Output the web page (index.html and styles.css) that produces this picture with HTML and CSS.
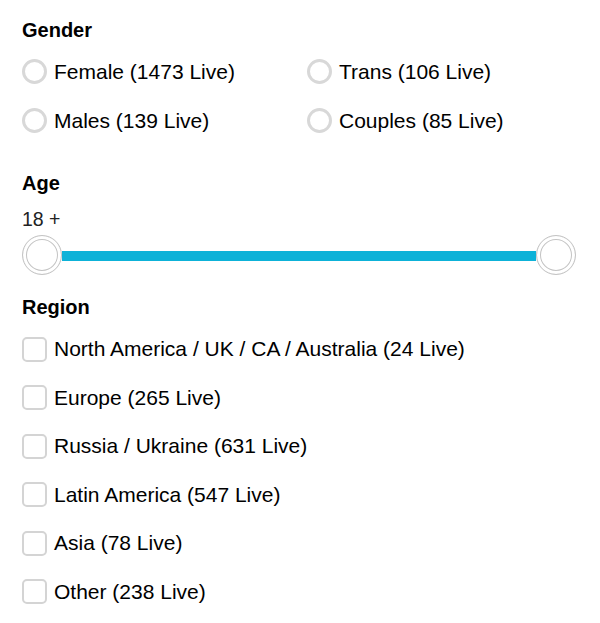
FILE: index.html
```html
<!DOCTYPE html>
<html lang="en">
  <head>
    <meta charset="UTF-8" />
    <meta name="viewport" content="width=device-width, initial-scale=1.0" />
    <title>Filters</title>
    <link rel="stylesheet" href="styles.css">
  </head>
  <body>
    <div class="filters">
      <h3 class="filter-title">Gender</h3>
      <div class="gender-list">
        <label class="option"><span class="radio"></span>Female (1473 Live)</label>
        <label class="option"><span class="radio"></span>Trans (106 Live)</label>
        <label class="option"><span class="radio"></span>Males (139 Live)</label>
        <label class="option"><span class="radio"></span>Couples (85 Live)</label>
      </div>

      <h3 class="filter-title age-title">Age</h3>
      <div class="age-value">18 +</div>
      <div class="slider">
        <span class="thumb"></span>
        <span class="track"></span>
        <span class="thumb"></span>
      </div>

      <h3 class="filter-title region-title">Region</h3>
      <div class="region-list">
        <label class="option"><span class="check"></span>North America / UK / CA / Australia (24 Live)</label>
        <label class="option"><span class="check"></span>Europe (265 Live)</label>
        <label class="option"><span class="check"></span>Russia / Ukraine (631 Live)</label>
        <label class="option"><span class="check"></span>Latin America (547 Live)</label>
        <label class="option"><span class="check"></span>Asia (78 Live)</label>
        <label class="option"><span class="check"></span>Other (238 Live)</label>
      </div>
    </div>
  </body>
</html>
```

FILE: styles.css
```css
body {
  font-family: "Liberation Sans", Arial, sans-serif;
  background-color: #fff;
  color: #000;
  margin: 0;
  padding: 0;
}
.filters {
  padding: 18px 24px 0 22px;
}
.filter-title {
  font-size: 20px;
  line-height: 24px;
  font-weight: bold;
  margin: 0;
}
.gender-list {
  display: grid;
  grid-template-columns: 285px 1fr;
  grid-auto-rows: 49px;
  margin-top: 5px;
}
.option {
  display: flex;
  align-items: center;
  gap: 7px;
  font-size: 21px;
  line-height: 24px;
}
.radio {
  width: 25px;
  height: 25px;
  box-sizing: border-box;
  border: 3px solid #d8d8d8;
  border-radius: 50%;
  flex-shrink: 0;
}
.age-title {
  margin-top: 26px;
}
.age-value {
  font-size: 19.5px;
  line-height: 24px;
  color: #222;
  margin-top: 12px;
}
.slider {
  display: flex;
  align-items: center;
  width: 554px;
  height: 40px;
  margin-top: 4px;
}
.thumb {
  width: 40px;
  height: 40px;
  box-sizing: border-box;
  border: 1px solid #c4c4c4;
  border-radius: 50%;
  box-shadow: inset 0 0 0 3px #fff, inset 0 0 0 4px #c4c4c4;
  background: #fff;
  flex-shrink: 0;
}
.track {
  flex: 1;
  height: 10px;
  margin-top: 2px;
  background-color: #0db2d8;
}
.region-title {
  margin-top: 20px;
}
.region-list {
  display: grid;
  grid-auto-rows: 48.5px;
  margin-top: 6px;
}
.check {
  width: 25px;
  height: 25px;
  box-sizing: border-box;
  border: 2px solid #d4d4d4;
  border-radius: 5px;
  flex-shrink: 0;
}
```
